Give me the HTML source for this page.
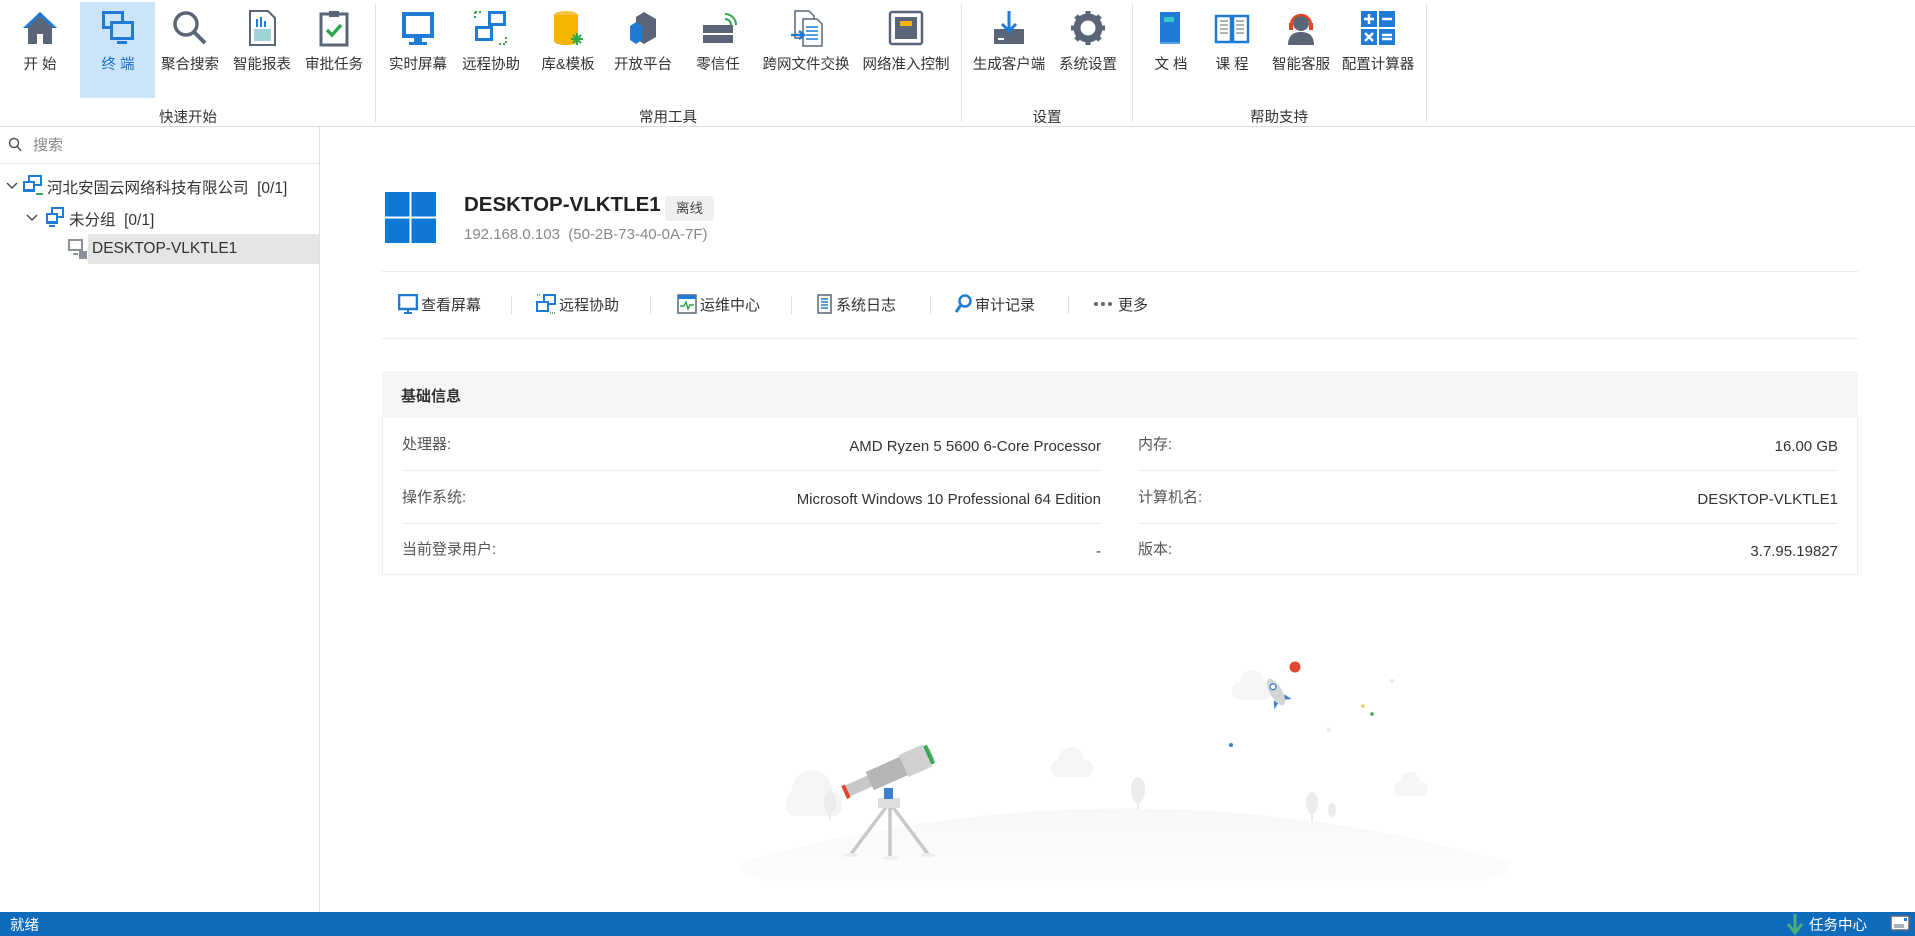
<!DOCTYPE html>
<html><head><meta charset="utf-8">
<style>
*{margin:0;padding:0;box-sizing:border-box}
html,body{width:1915px;height:936px;overflow:hidden}
body{position:relative;background:#fff;font-family:"Liberation Sans","Noto Sans CJK SC",sans-serif;color:#333}
.a{position:absolute}
.tb{position:absolute;top:0;width:80px;height:100px;text-align:center;font-size:14.5px;color:#333}
.tb svg{position:absolute;left:50%;top:9px;margin-left:-19px;width:38px;height:38px}
.tb span{position:absolute;top:53px;left:-10px;right:-10px;white-space:nowrap}
.sep{position:absolute;top:4px;width:1px;height:118px;background:#e2e2e2}
.gl{position:absolute;top:106px;font-size:14.5px;color:#333;transform:translateX(-50%)}
.act{position:absolute;top:294px;font-size:15px;color:#333;white-space:nowrap}
.act svg{vertical-align:-4px;margin-right:3px}
.vs{position:absolute;top:296px;width:1px;height:18px;background:#e0e0e0}
.lbl{position:absolute;font-size:15px;line-height:20px;color:#555}
.val{position:absolute;font-size:15px;line-height:20px;color:#333;text-align:right;padding-top:2px}
.hl{position:absolute;height:1px;background:#ececec}
</style></head><body>
<!-- toolbar -->
<div class="a" style="left:80px;top:2px;width:75px;height:96px;background:#cce4f7"></div>
<div class="tb" style="left:0"><svg viewBox="0 0 38 38"><path d="M19 3L2 19h5v16h9V25h6v10h9V19h5z" fill="#5a6578"/><path d="M19 3L2 19h4L19 7l13 12h4z" fill="#1f7bd6"/></svg><span>开 始</span></div>
<div class="tb" style="left:78px"><svg viewBox="0 0 38 38"><rect x="3" y="2" width="22" height="18" fill="#1f7bd6"/><rect x="6" y="5" width="16" height="12" fill="#cce4f7"/><rect x="11" y="12" width="24" height="19" fill="#1f7bd6"/><rect x="14" y="15" width="18" height="13" fill="#cce4f7"/><rect x="18" y="32" width="10" height="3" fill="#1f7bd6"/></svg><span style="color:#1a6fc0">终 端</span></div>
<div class="tb" style="left:150px"><svg viewBox="0 0 38 38"><circle cx="15" cy="15" r="11" fill="none" stroke="#5a6578" stroke-width="3.5"/><path d="M23 23l11 11" stroke="#5a6578" stroke-width="4"/></svg><span>聚合搜索</span></div>
<div class="tb" style="left:222px"><svg viewBox="0 0 38 38"><path d="M7 2h18l7 7v27H7z" fill="#fff" stroke="#5a6578" stroke-width="2"/><rect x="11" y="20" width="17" height="12" fill="#9fd4d6"/><rect x="13" y="10" width="2" height="8" fill="#1f7bd6"/><rect x="17" y="8" width="2" height="10" fill="#1f7bd6"/><rect x="21" y="12" width="2" height="6" fill="#1f7bd6"/></svg><span>智能报表</span></div>
<div class="tb" style="left:294px"><svg viewBox="0 0 38 38"><rect x="6" y="5" width="26" height="31" fill="#fff" stroke="#5a6578" stroke-width="3"/><rect x="14" y="2" width="10" height="6" fill="#5a6578"/><path d="M12 21l5 5 9-10" fill="none" stroke="#2fa84f" stroke-width="3.5"/></svg><span>审批任务</span></div>
<div class="sep" style="left:375px"></div>
<div class="tb" style="left:378px"><svg viewBox="0 0 38 38"><rect x="3" y="3" width="32" height="26" fill="#1f7bd6"/><rect x="7" y="7" width="24" height="18" fill="#fff"/><rect x="15" y="29" width="8" height="4" fill="#1f7bd6"/><rect x="10" y="33" width="18" height="3" fill="#1f7bd6"/></svg><span>实时屏幕</span></div>
<div class="tb" style="left:451px"><svg viewBox="0 0 38 38"><rect x="16" y="2" width="18" height="15" fill="#1f7bd6"/><rect x="19" y="5" width="12" height="9" fill="#fff"/><rect x="3" y="17" width="18" height="15" fill="#1f7bd6"/><rect x="6" y="20" width="12" height="9" fill="#fff"/><path d="M3 3h8M3 3v8M34 28v7h-8" stroke="#2fa84f" stroke-width="2" stroke-dasharray="2 2" fill="none"/></svg><span>远程协助</span></div>
<div class="tb" style="left:528px"><svg viewBox="0 0 38 38"><ellipse cx="17" cy="6" rx="12" ry="4" fill="#f6c343"/><rect x="5" y="6" width="24" height="26" fill="#f5b400"/><ellipse cx="17" cy="32" rx="12" ry="4" fill="#f5b400"/><path d="M28 24v12M22 30h12M24 26l8 8M32 26l-8 8" stroke="#2fa84f" stroke-width="2"/></svg><span>库&amp;模板</span></div>
<div class="tb" style="left:603px"><svg viewBox="0 0 38 38"><path d="M20 3l12 7v18l-12 7-8-5V8z" fill="#5a6578"/><path d="M12 13l6 4v14l-6 4-6-4V17z" fill="#1f7bd6"/></svg><span>开放平台</span></div>
<div class="tb" style="left:678px"><svg viewBox="0 0 38 38"><rect x="4" y="16" width="30" height="8" fill="#5a6578"/><rect x="4" y="26" width="30" height="8" fill="#5a6578"/><path d="M26 10a6 6 0 016 6M26 5a11 11 0 0111 11" stroke="#2fa84f" stroke-width="2" fill="none"/></svg><span>零信任</span></div>
<div class="tb" style="left:766px"><svg viewBox="0 0 38 38"><path d="M8 2h14l5 5v22H8z" fill="#fff" stroke="#5a6578" stroke-width="1.5"/><path d="M16 10h14l5 5v22H16z" fill="#fff" stroke="#5a6578" stroke-width="1.5"/><path d="M19 18h12M19 22h12M19 26h12M19 30h12" stroke="#1f7bd6" stroke-width="1.5"/><path d="M4 26h12M12 22l5 4-5 4" stroke="#1f7bd6" stroke-width="2.5" fill="none"/></svg><span>跨网文件交换</span></div>
<div class="tb" style="left:866px"><svg viewBox="0 0 38 38"><rect x="3" y="3" width="32" height="32" rx="2" fill="#fff" stroke="#5a6578" stroke-width="2.5"/><rect x="8" y="8" width="22" height="22" fill="#5a6578"/><rect x="13" y="12" width="12" height="5" fill="#f5b400"/></svg><span>网络准入控制</span></div>
<div class="sep" style="left:961px"></div>
<div class="tb" style="left:969px"><svg viewBox="0 0 38 38"><rect x="4" y="20" width="30" height="15" fill="#5a6578"/><rect x="8" y="29" width="6" height="2" fill="#fff"/><path d="M19 2v20M12 15l7 7 7-7" stroke="#1f7bd6" stroke-width="3" fill="none"/></svg><span>生成客户端</span></div>
<div class="tb" style="left:1048px"><svg viewBox="0 0 38 38"><circle cx="19" cy="19" r="11" fill="none" stroke="#5a6578" stroke-width="7"/><path d="M19 2v8M19 28v8M2 19h8M28 19h8M7 7l6 6M25 25l6 6M31 7l-6 6M7 31l6-6" stroke="#5a6578" stroke-width="5"/></svg><span>系统设置</span></div>
<div class="sep" style="left:1132px"></div>
<div class="tb" style="left:1131px"><svg viewBox="0 0 38 38"><rect x="8" y="3" width="20" height="32" fill="#1f7bd6"/><rect x="8" y="33" width="20" height="2" fill="#5a9fe6"/><rect x="12" y="8" width="10" height="5" fill="#37c7c7"/></svg><span>文 档</span></div>
<div class="tb" style="left:1192px"><svg viewBox="0 0 38 38"><path d="M3 7h15v26H3zM20 7h15v26H20z" fill="#fff" stroke="#1f7bd6" stroke-width="2.5"/><path d="M7 12h8M7 16h8M7 20h8M7 24h8M23 12h8M23 16h8M23 20h8M23 24h8" stroke="#999" stroke-width="1.5"/></svg><span>课 程</span></div>
<div class="tb" style="left:1261px"><svg viewBox="0 0 38 38"><circle cx="19" cy="14" r="8" fill="#5a6578"/><path d="M6 36c0-10 6-13 13-13s13 3 13 13z" fill="#5a6578"/><path d="M9 16a10 10 0 0120 0" stroke="#e0461c" stroke-width="2.5" fill="none"/><rect x="7" y="14" width="4" height="7" fill="#e0461c"/><rect x="27" y="14" width="4" height="7" fill="#e0461c"/></svg><span>智能客服</span></div>
<div class="tb" style="left:1338px"><svg viewBox="0 0 38 38"><rect x="2" y="2" width="16" height="16" fill="#1f7bd6"/><rect x="20" y="2" width="16" height="16" fill="#1f7bd6"/><rect x="2" y="20" width="16" height="16" fill="#1f7bd6"/><rect x="20" y="20" width="16" height="16" fill="#1f7bd6"/><path d="M10 5v10M5 10h10M23 10h10M6 24l8 8M14 24l-8 8M23 26h10M23 30h10" stroke="#fff" stroke-width="2.5"/></svg><span>配置计算器</span></div>
<div class="sep" style="left:1426px"></div>
<div class="gl" style="left:188px">快速开始</div>
<div class="gl" style="left:668px">常用工具</div>
<div class="gl" style="left:1047px">设置</div>
<div class="gl" style="left:1279px">帮助支持</div>
<div class="a" style="left:0;top:126px;width:1915px;height:1px;background:#dcdcdc"></div>
<!-- sidebar -->
<div class="a" style="left:319px;top:127px;width:1px;height:785px;background:#e0e0e0"></div>
<div class="a" style="left:0;top:163px;width:319px;height:1px;background:#e6e6e6"></div>
<svg class="a" style="left:8px;top:137px" width="14" height="15"><circle cx="6" cy="6" r="4.5" fill="none" stroke="#555" stroke-width="1.5"/><path d="M9 9l4 5" stroke="#555" stroke-width="1.5"/></svg>
<div class="a" style="left:33px;top:134px;font-size:15px;color:#888">搜索</div>
<div class="a" style="left:88px;top:234px;width:231px;height:30px;background:#e5e5e5"></div>
<svg class="a" style="left:6px;top:181px" width="12" height="10"><path d="M1 2l5 5 5-5" fill="none" stroke="#444" stroke-width="1.4"/></svg>
<svg class="a" style="left:22px;top:174px" width="22" height="22"><rect x="6" y="1" width="14" height="11" fill="#1f7bd6"/><rect x="8" y="3" width="10" height="7" fill="#fff"/><rect x="1" y="7" width="12" height="11" fill="#1f7bd6"/><rect x="3" y="9" width="8" height="6" fill="#fff"/><path d="M14 20h7" stroke="#2fa84f" stroke-width="2"/></svg>
<div class="a" style="left:47px;top:176px;font-size:15.5px">河北安固云网络科技有限公司 &nbsp;[0/1]</div>
<svg class="a" style="left:26px;top:213px" width="12" height="10"><path d="M1 2l5 5 5-5" fill="none" stroke="#444" stroke-width="1.4"/></svg>
<svg class="a" style="left:44px;top:206px" width="22" height="22"><rect x="7" y="1" width="13" height="11" fill="#1f7bd6"/><rect x="9" y="3" width="9" height="7" fill="#fff"/><rect x="2" y="7" width="12" height="11" fill="#1f7bd6"/><rect x="4" y="9" width="8" height="6" fill="#fff"/><rect x="5" y="19" width="6" height="2" fill="#1f7bd6"/></svg>
<div class="a" style="left:69px;top:208px;font-size:15.5px">未分组 &nbsp;[0/1]</div>
<svg class="a" style="left:66px;top:238px" width="22" height="22"><rect x="2" y="1" width="15" height="12" fill="#8a8f99"/><rect x="4" y="3" width="11" height="8" fill="#fff"/><rect x="7" y="15" width="5" height="2" fill="#8a8f99"/><rect x="13" y="13" width="8" height="8" fill="#8a8f99"/></svg>
<div class="a" style="left:92px;top:240px;font-size:15.5px">DESKTOP-VLKTLE1</div>
<!-- main header -->
<svg class="a" style="left:385px;top:192px" width="51" height="51"><rect x="0" y="0" width="24.5" height="24.5" fill="#0f78d4"/><rect x="26.5" y="0" width="24.5" height="24.5" fill="#0f78d4"/><rect x="0" y="26.5" width="24.5" height="24.5" fill="#0f78d4"/><rect x="26.5" y="26.5" width="24.5" height="24.5" fill="#0f78d4"/></svg>
<div class="a" style="left:464px;top:193px;font-size:20.5px;font-weight:bold;color:#222">DESKTOP-VLKTLE1</div>
<div class="a" style="left:665px;top:196px;width:49px;height:25px;background:#f0f0f0;border-radius:3px;font-size:13.5px;color:#444;text-align:center;line-height:25px">离线</div>
<div class="a" style="left:464px;top:226px;font-size:15px;color:#888">192.168.0.103 &nbsp;(50-2B-73-40-0A-7F)</div>
<div class="hl" style="left:382px;top:271px;width:1476px"></div>
<div class="act" style="left:398px"><svg width="20" height="20"><rect x="1" y="1" width="18" height="14" fill="none" stroke="#1f7bd6" stroke-width="2.5"/><path d="M10 15v3M6 19h8" stroke="#1f7bd6" stroke-width="2"/></svg>查看屏幕</div>
<div class="vs" style="left:511px"></div>
<div class="act" style="left:536px"><svg width="20" height="20"><rect x="8" y="1" width="11" height="9" fill="none" stroke="#1f7bd6" stroke-width="2"/><rect x="1" y="8" width="11" height="9" fill="#fff" stroke="#1f7bd6" stroke-width="2"/><path d="M1 1h3M14 19h5" stroke="#2fa84f" stroke-width="1.5" stroke-dasharray="1 1"/></svg>远程协助</div>
<div class="vs" style="left:650px"></div>
<div class="act" style="left:677px"><svg width="20" height="20"><rect x="1" y="1" width="18" height="18" fill="#fff" stroke="#5a6578" stroke-width="1.5"/><rect x="1" y="1" width="18" height="4" fill="#1f7bd6"/><path d="M3 12h4l2-4 2 7 2-4h4" stroke="#2fa84f" stroke-width="1.5" fill="none"/></svg>运维中心</div>
<div class="vs" style="left:791px"></div>
<div class="act" style="left:817px"><svg width="16" height="20"><rect x="1" y="1" width="13" height="18" fill="#fff" stroke="#5a6578" stroke-width="1.5"/><path d="M4 5h7M4 8h7M4 11h7M4 14h7" stroke="#1f7bd6" stroke-width="1.5"/></svg>系统日志</div>
<div class="vs" style="left:930px"></div>
<div class="act" style="left:954px"><svg width="18" height="20"><circle cx="11" cy="7" r="5.5" fill="none" stroke="#1f7bd6" stroke-width="2.5"/><path d="M7 11l-5 7" stroke="#1f7bd6" stroke-width="3"/></svg>审计记录</div>
<div class="vs" style="left:1068px"></div>
<div class="act" style="left:1093px"><svg width="22" height="20"><circle cx="3" cy="10" r="2" fill="#666"/><circle cx="10" cy="10" r="2" fill="#666"/><circle cx="17" cy="10" r="2" fill="#666"/></svg>更多</div>
<div class="hl" style="left:382px;top:338px;width:1476px"></div>
<!-- info panel -->
<div class="a" style="left:382px;top:371px;width:1476px;height:204px;border:1px solid #ececec"></div>
<div class="a" style="left:382px;top:371px;width:1476px;height:47px;background:#f6f6f6"></div>
<div class="a" style="left:401px;top:385px;font-size:15px;font-weight:bold;color:#333">基础信息</div>
<div class="lbl" style="left:402px;top:435px">处理器:</div>
<div class="val" style="right:814px;top:435px">AMD Ryzen 5 5600 6-Core Processor</div>
<div class="lbl" style="left:1138px;top:435px">内存:</div>
<div class="val" style="right:77px;top:435px">16.00 GB</div>
<div class="hl" style="left:402px;top:470px;width:700px"></div>
<div class="hl" style="left:1138px;top:470px;width:700px"></div>
<div class="lbl" style="left:402px;top:488px">操作系统:</div>
<div class="val" style="right:814px;top:488px">Microsoft Windows 10 Professional 64 Edition</div>
<div class="lbl" style="left:1138px;top:488px">计算机名:</div>
<div class="val" style="right:77px;top:488px">DESKTOP-VLKTLE1</div>
<div class="hl" style="left:402px;top:523px;width:700px"></div>
<div class="hl" style="left:1138px;top:523px;width:700px"></div>
<div class="lbl" style="left:402px;top:540px">当前登录用户:</div>
<div class="val" style="right:814px;top:540px">-</div>
<div class="lbl" style="left:1138px;top:540px">版本:</div>
<div class="val" style="right:77px;top:540px">3.7.95.19827</div>
<!-- illustration -->
<svg class="a" style="left:740px;top:640px" width="780" height="260" viewBox="0 0 780 260">
<defs><linearGradient id="g" x1="0" y1="0" x2="0" y2="1"><stop offset="0" stop-color="#f7f7f7"/><stop offset="1" stop-color="#fdfdfd"/></linearGradient></defs>
<path d="M0 222 Q385 115 770 222 Q770 242 720 242 H50 Q0 242 0 222Z" fill="url(#g)"/>
<g fill="#f5f5f5"><circle cx="72" cy="150" r="20"/><circle cx="58" cy="162" r="12"/><circle cx="90" cy="164" r="12"/><rect x="46" y="158" width="56" height="18" rx="9"/>
<circle cx="331" cy="120" r="13"/><rect x="311" y="120" width="42" height="17" rx="8"/>
<circle cx="512" cy="42" r="12"/><rect x="492" y="42" width="40" height="18" rx="8"/>
<circle cx="670" cy="142" r="10"/><rect x="654" y="142" width="34" height="14" rx="7"/></g>
<g fill="#ececec"><ellipse cx="398" cy="150" rx="7" ry="13"/><rect x="397" y="156" width="2" height="14"/><ellipse cx="90" cy="162" rx="6" ry="11"/><rect x="89" y="168" width="2" height="12"/><ellipse cx="572" cy="163" rx="6" ry="11"/><rect x="571" y="168" width="2" height="14"/><ellipse cx="592" cy="170" rx="4" ry="7"/></g>
<g stroke="#c8c8c8" stroke-width="3.5"><path d="M147 166l-36 48M152 166l36 48M150 166v50"/></g>
<ellipse cx="111" cy="215" rx="8" ry="2" fill="#eee"/><ellipse cx="188" cy="215" rx="8" ry="2" fill="#eee"/><ellipse cx="150" cy="218" rx="8" ry="2" fill="#eee"/>
<rect x="138" y="158" width="22" height="10" fill="#ddd"/>
<rect x="144" y="148" width="9" height="11" fill="#3d7fcf"/>
<g transform="rotate(-24 148 133)"><rect x="104" y="127" width="92" height="12" fill="#c8c8c8"/><rect x="128" y="123" width="40" height="20" fill="#b5b5b5"/><rect x="165" y="121" width="26" height="24" fill="#d0d0d0"/><rect x="100" y="126" width="4" height="14" fill="#e0462f"/><rect x="191" y="123" width="4" height="20" fill="#34a853"/></g>
<circle cx="555" cy="27" r="5.5" fill="#e0462f"/>
<g transform="rotate(-30 536 52)"><ellipse cx="536" cy="52" rx="6" ry="15" fill="#d5d5d5"/><circle cx="536" cy="46" r="3" fill="#fff" stroke="#3d7fcf" stroke-width="1.3"/><path d="M530 58l-4 8 6-3zM542 58l4 8-6-3z" fill="#3d7fcf"/></g>
<circle cx="652" cy="41" r="2" fill="#e8e8e8"/><circle cx="623" cy="66" r="1.8" fill="#f5cc4a"/><circle cx="632" cy="74" r="1.8" fill="#34a853"/><circle cx="589" cy="90" r="2.5" fill="#eee"/><circle cx="491" cy="105" r="2" fill="#3d7fcf"/>
</svg>
<!-- status bar -->
<div class="a" style="left:0;top:912px;width:1915px;height:24px;background:#0f6cbd"></div>
<div class="a" style="left:10px;top:914px;font-size:14.5px;color:#fff">就绪</div>
<svg class="a" style="left:1785px;top:912px" width="20" height="24"><path d="M10 2v20M3 12l7 9 7-9" stroke="#4caf7a" stroke-width="3" fill="none"/></svg>
<div class="a" style="left:1809px;top:914px;font-size:14.5px;color:#fff">任务中心</div>
<svg class="a" style="left:1890px;top:914px" width="20" height="18"><rect x="1" y="2" width="18" height="14" fill="#fff" stroke="#5a6578" stroke-width="1.5"/><path d="M4 11h10M4 13h10" stroke="#5a6578"/><rect x="14" y="4" width="3" height="3" fill="#1f7bd6"/></svg>
</body></html>
